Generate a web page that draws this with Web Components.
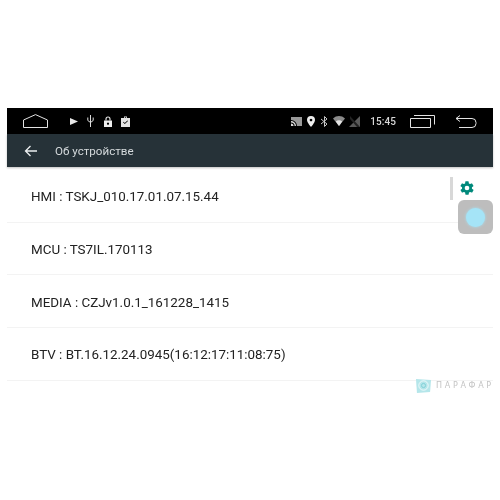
<!DOCTYPE html>
<html><head><meta charset="utf-8"><style>
html,body{margin:0;background:#fff}
body{width:500px;height:500px;overflow:hidden;font-family:Roboto,"Liberation Sans",sans-serif}
</style></head><body>
<device-screen>
  <status-bar></status-bar>
  <app-bar>Об устройстве</app-bar>
  <info-list>
    <info-row>HMI : TSKJ_010.17.01.07.15.44</info-row>
    <info-row>MCU : TS7IL.170113</info-row>
    <info-row>MEDIA : CZJv1.0.1_161228_1415</info-row>
    <info-row>BTV : BT.16.12.24.0945(16:12:17:11:08:75)</info-row>
  </info-list>
  <float-tools></float-tools>
  <brand-mark></brand-mark>
</device-screen>
<script>
const def=(n,html)=>customElements.define(n,class extends HTMLElement{constructor(){super();this.attachShadow({mode:'open'}).innerHTML=html}});
def('device-screen',`<style>:host{display:block;position:relative;margin:108px 7px 0;width:486px;height:392px;filter:blur(.35px)}</style><slot></slot>`);
def('status-bar',`<style>
:host{display:flex;align-items:center;height:26px;background:#000;color:#ddd;position:relative}
svg{display:block;flex:none}
.t{font:500 10px Roboto,sans-serif;color:#d8d8d8;letter-spacing:.1px}
</style>
<svg style="margin-left:16px" width="25" height="14" viewBox="0 0 25 14" fill="none" stroke="#e4e4e4" stroke-width="1"><path d="M.5 6 12.500.6 24.500 6v7.500H.5z"/></svg>
<svg style="margin-left:22px" width="8" height="9" viewBox="0 0 8 9"><path d="M0 1l8 3.500L0 8z" fill="#e8e8e8"/></svg>
<svg style="margin-left:9px" width="7" height="12" viewBox="0 0 7 12" fill="none" stroke="#ddd"><path d="M3.500 0v12M.8 2.500v3l2.700 2 2.700-2v-3"/></svg>
<svg style="margin-left:10px" width="8" height="11" viewBox="0 0 8 11"><path d="M2 4.500V3a2 2 0 0 1 4 0v1.500" fill="none" stroke="#eee" stroke-width="1.100"/><path fill-rule="evenodd" d="M0 4.500h8V11H0zM4 6.500a1.100 1.100 0 1 0 .01 0z" fill="#eee"/></svg>
<svg style="margin-left:9px" width="9" height="11" viewBox="0 0 9 11"><path fill-rule="evenodd" d="M3 2V.6h3V2h3v9H0V2zM3.800 2h1.400V1.300H3.800zM2 6.300l1.800 1.800 3.200-3-.6-.6-2.600 2.400-1.200-1.200z" fill="#e4e4e4"/></svg>
<span style="flex:1"></span>
<svg width="11" height="9" viewBox="0 0 11 9"><path d="M0 0h11v9H6A6 6 0 0 0 0 3z" fill="#9a9a9a"/><path d="M0 4a5 5 0 0 1 5 5H3.600A3.600 3.600 0 0 0 0 5.400zM0 6.500A2.500 2.500 0 0 1 2.500 9H0z" fill="#ddd"/></svg>
<svg style="margin-left:5px" width="8" height="11" viewBox="0 0 8 11"><path fill-rule="evenodd" d="M4 0a4 4 0 0 1 4 4c0 2.600-4 7-4 7S0 6.600 0 4a4 4 0 0 1 4-4zM4 2.700a1.300 1.300 0 1 0 .01 0z" fill="#eee"/></svg>
<svg style="margin-left:5px" width="9" height="11" viewBox="0 0 9 11" fill="none" stroke="#c8c8c8" stroke-width="1"><path d="M1 3l6 5-2.500 2.500v-10L7 3 1 8"/></svg>
<svg style="margin-left:4px" width="12" height="10" viewBox="0 0 12 10"><path d="M0 2.500C3.300-.8 8.700-.8 12 2.500L6 10z" fill="#8a8a8a"/><path d="M2.800 5.500c1.900-1.600 4.500-1.600 6.400 0L6 10z" fill="#e4e4e4"/></svg>
<svg style="margin-left:4px" width="11" height="11" viewBox="0 0 11 11"><path d="M11 0v11H0z" fill="#5a5a5a"/><path d="M1 0l10 11H8L1 3z" fill="#222"/></svg>
<span class="t" style="margin-left:10px">15:45</span>
<svg style="margin-left:14px" width="25" height="13" viewBox="0 0 25 13" fill="none" stroke="#e4e4e4"><path d="M.5 3.500h20v9H.5zM4 .5h20.500v9"/></svg>
<svg style="margin:0 16px 0 20px" width="22" height="13" viewBox="0 0 22 13" fill="none" stroke="#e4e4e4"><path d="M5 .5 1 3.500l4 3M1 3.500h16a4 4 0 0 1 4 4v1a4 4 0 0 1-4 4H4"/></svg>`);
def('app-bar',`<style>
:host{display:flex;align-items:center;height:33px;background:#263238;box-shadow:0 1px 2px rgba(0,0,0,.25);position:relative;color:#d5dadc;font:11.600px Roboto,sans-serif}
svg{display:block;margin:0 17px 0 17px}
</style><svg width="14" height="12" viewBox="0 0 14 12" fill="none" stroke="#eceff0" stroke-width="1.300"><path d="M13 6H1.500M6.500 1 1.500 6l5 5"/></svg><slot></slot>`);
def('info-list',`<style>:host{display:block;padding-top:3px}</style><slot></slot>`);
def('info-row',`<style>
:host{display:flex;align-items:center;height:52.700px;box-sizing:border-box;padding:2px 0 0 24px;border-bottom:1px solid #f3f3f3;color:#222;font:13.400px Roboto,sans-serif}
</style><slot></slot>`);
def('float-tools',`<style>
:host{position:absolute;left:443px;top:69px;width:43px;height:58px;display:block}
.bar{position:absolute;left:0;top:0;width:3px;height:23px;background:#d8d8d8}
svg{position:absolute;left:9px;top:3px}
.btn{position:absolute;left:8px;top:23px;width:35px;height:34px;border-radius:6px;background:#bdbdbd;display:flex;align-items:center;justify-content:center}
.dot{width:19px;height:19px;border-radius:50%;background:#a5e4f7;box-shadow:0 0 3px #a5e4f7}
</style><div class="bar"></div>
<svg width="16" height="16" viewBox="0 0 24 24"><path fill="#00897b" d="M19.400 13a7.500 7.500 0 0 0 0-2l2.100-1.600c.2-.15.25-.4.12-.63l-2-3.460c-.12-.22-.38-.3-.6-.22l-2.500 1a7.300 7.300 0 0 0-1.700-1l-.38-2.650A.5.500 0 0 0 14 2h-4a.5.500 0 0 0-.5.420L9.100 5.070a7.700 7.700 0 0 0-1.700 1l-2.500-1a.5.500 0 0 0-.6.220l-2 3.460c-.13.220-.07.480.12.630L4.600 11a7.900 7.900 0 0 0 0 2l-2.100 1.600c-.2.150-.25.400-.12.630l2 3.460c.12.220.38.300.6.220l2.500-1c.52.400 1.080.730 1.700 1l.38 2.650c.04.240.25.420.5.420h4c.25 0 .46-.18.500-.42l.38-2.650a7.700 7.700 0 0 0 1.700-1l2.500 1c.22.080.48 0 .6-.22l2-3.460c.13-.22.070-.48-.12-.63zM12 15.500a3.500 3.500 0 1 1 0-7 3.500 3.500 0 0 1 0 7z"/></svg>
<div class="btn"><div class="dot"></div></div>`);
def('brand-mark',`<style>
:host{position:absolute;left:409px;top:270px;display:flex;align-items:center;gap:5px;font:400 8px "DejaVu Sans",sans-serif;letter-spacing:2.700px;color:#c4c4c4;white-space:nowrap}
svg{flex:none}
</style>
<svg width="15" height="15" viewBox="0 0 16 16" fill="none"><path d="M0 1l16 1-1 13-14 1z" fill="#b5e6ea"/><circle cx="8" cy="8" r="5" stroke="#fff" stroke-opacity=".8"/><circle cx="8" cy="8" r="2.200" stroke="#7fcfd6"/></svg><span>ПАРАФАР</span>`);
</script>
</body></html>
